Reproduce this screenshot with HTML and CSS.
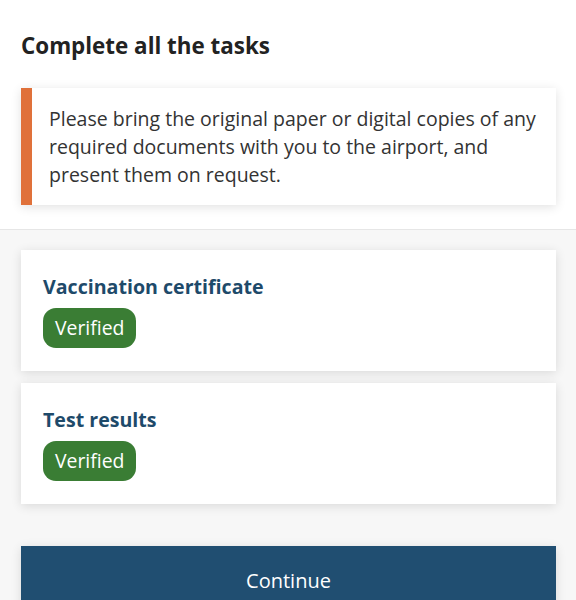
FILE: index.html
```html
<!DOCTYPE html>
<html lang="en">
<head>
    <meta charset="UTF-8">
    <meta name="viewport" content="width=device-width, initial-scale=1.0">
    <title>Complete all the tasks</title>
    <link rel="stylesheet" href="styles.css">
</head>
<body>
    <div class="top">
        <h1 class="title">Complete all the tasks</h1>
        <div class="notice">
            <p>Please bring the original paper or digital copies of any required documents with you to the airport, and present them on request.</p>
        </div>
    </div>
    <div class="tasks">
        <div class="task">
            <div class="task-title">Vaccination certificate</div>
            <span class="badge">Verified</span>
        </div>
        <div class="task">
            <div class="task-title">Test results</div>
            <span class="badge">Verified</span>
        </div>
        <div class="continue">Continue</div>
    </div>
</body>
</html>
```

FILE: styles.css
```css
body {
    font-family: "Open Sans", Arial, sans-serif;
    background-color: #f7f7f7;
    color: #333;
    margin: 0;
}
.top {
    background-color: white;
    padding: 31px 20px 24px 21px;
    border-bottom: 1px solid #e6e6e6;
}
.title {
    font-size: 22.4px;
    font-weight: 700;
    color: #222;
    margin: 0 0 27px 0;
    line-height: 30px;
}
.notice {
    background-color: white;
    border-left: 11px solid #e0713a;
    box-shadow: 0 2px 10px rgba(0, 0, 0, 0.12);
    padding: 17px 14px 16px 17px;
}
.notice p {
    margin: 0;
    font-size: 19.5px;
    line-height: 28px;
    color: #333;
}
.tasks {
    padding: 20px 20px 0 21px;
    display: flex;
    flex-direction: column;
    gap: 12px;
}
.task {
    background-color: white;
    box-shadow: 0 2px 10px rgba(0, 0, 0, 0.12);
    padding: 23px 22px 23px 22px;
}
.task-title {
    font-size: 19.6px;
    font-weight: 700;
    color: #1e4a6a;
    line-height: 28px;
    margin-bottom: 7px;
}
.badge {
    display: inline-block;
    background-color: #3a7d34;
    color: white;
    font-size: 19.4px;
    line-height: 26px;
    padding: 7px 12px;
    border-radius: 13px;
}
.continue {
    margin-top: 30px;
    background-color: #204e71;
    color: white;
    font-size: 20px;
    text-align: center;
    padding: 21px 0;
    box-shadow: 0 2px 10px rgba(0, 0, 0, 0.12);
}
```
